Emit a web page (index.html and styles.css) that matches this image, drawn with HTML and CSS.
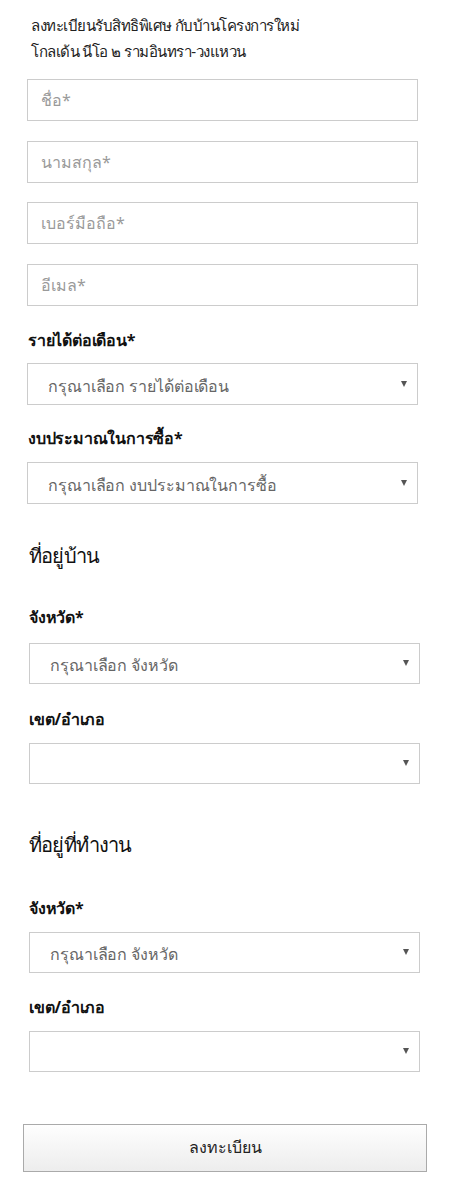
FILE: index.html
```html
<!DOCTYPE html>
<html lang="th">
<head>
<meta charset="utf-8">
<title>ลงทะเบียน</title>
<link rel="stylesheet" href="styles.css">
</head>
<body>
<div class="page">
  <p class="intro">ลงทะเบียนรับสิทธิพิเศษ กับบ้านโครงการใหม่<br>โกลเด้น นีโอ ๒ รามอินทรา-วงแหวน</p>
  <form class="form">
    <div class="main">
      <input class="field" type="text" placeholder="ชื่อ*">
      <input class="field" type="text" placeholder="นามสกุล*">
      <input class="field" type="text" placeholder="เบอร์มือถือ*">
      <input class="field" type="text" placeholder="อีเมล*">
      <label class="label first">รายได้ต่อเดือน*</label>
      <div class="select-wrap"><select class="select tall"><option>กรุณาเลือก รายได้ต่อเดือน</option></select></div>
      <label class="label">งบประมาณในการซื้อ*</label>
      <div class="select-wrap"><select class="select tall"><option>กรุณาเลือก งบประมาณในการซื้อ</option></select></div>
    </div>
    <div class="addr home">
      <h2 class="heading">ที่อยู่บ้าน</h2>
      <label class="label top">จังหวัด*</label>
      <div class="select-wrap"><select class="select"><option>กรุณาเลือก จังหวัด</option></select></div>
      <label class="label">เขต/อำเภอ</label>
      <div class="select-wrap"><select class="select"><option></option></select></div>
    </div>
    <div class="addr work">
      <h2 class="heading">ที่อยู่ที่ทำงาน</h2>
      <label class="label top">จังหวัด*</label>
      <div class="select-wrap"><select class="select"><option>กรุณาเลือก จังหวัด</option></select></div>
      <label class="label">เขต/อำเภอ</label>
      <div class="select-wrap"><select class="select"><option></option></select></div>
    </div>
    <button class="submit" type="button">ลงทะเบียน</button>
  </form>
</div>
</body>
</html>
```

FILE: styles.css
```css
* { box-sizing: border-box; }
html, body { margin: 0; padding: 0; background: #fff; }
body {
  font-family: "Noto Sans", "Liberation Sans", sans-serif;
  color: #222;
}
.page {
  padding: 12px 0 0 0;
}
.intro {
  margin: 0 0 15px 31px;
  font-size: 15px;
  line-height: 26px;
  letter-spacing: -0.5px;
  color: #222;
}
.form {
  display: flex;
  flex-direction: column;
}
.main {
  display: flex;
  flex-direction: column;
  margin-left: 27px;
  width: 391px;
}
.field {
  display: block;
  width: 100%;
  height: 42px;
  margin: 0 0 19.5px 0;
  padding: 0 13px;
  border: 1px solid #ccc;
  border-radius: 0;
  font-family: inherit;
  font-size: 16px;
  color: #333;
  outline: none;
}
.field:last-of-type { margin-bottom: 0; }
.field::placeholder { color: #9a9a9a; }
.label {
  display: block;
  margin: 21px 0 12px 1px;
  font-size: 16px;
  line-height: 24px;
  font-weight: 700;
  color: #111;
  letter-spacing: -0.2px;
}
.label.first { margin-top: 22px; margin-bottom: 11px; }
.select-wrap {
  position: relative;
}
.select-wrap::after {
  content: "";
  position: absolute;
  right: 11px;
  top: 50%;
  margin-top: -3px;
  border-left: 3.5px solid transparent;
  border-right: 3.5px solid transparent;
  border-top: 6px solid #555;
  pointer-events: none;
}
.select {
  display: block;
  width: 100%;
  height: 41px;
  padding: 4px 0 0 20px;
  border: 1px solid #ccc;
  border-radius: 0;
  background: #fff;
  font-family: inherit;
  font-size: 16px;
  color: #666;
  letter-spacing: -0.1px;
  -webkit-appearance: none;
  appearance: none;
  outline: none;
}
.select.tall { height: 42px; }
.addr {
  display: flex;
  flex-direction: column;
  margin-left: 29px;
  width: 391px;
}
.heading {
  margin: 0;
  font-size: 20px;
  line-height: 28px;
  font-weight: 400;
  letter-spacing: -0.8px;
  color: #111;
}
.home { margin-top: 38px; }
.work { margin-top: 47px; }
.addr .label { margin-top: 23px; margin-bottom: 12px; margin-left: 0; }
.addr .label.top { margin-top: 35px; margin-bottom: 14px; }
.work .label.top { margin-top: 37px; margin-bottom: 12px; }
.work .label { margin-top: 22px; }
.submit {
  display: block;
  margin: 52px 0 0 23px;
  width: 404px;
  height: 48px;
  border: 1px solid #aaa;
  border-radius: 0;
  background: linear-gradient(#fefefe, #ededed);
  font-family: inherit;
  font-size: 16px;
  color: #222;
}
```
